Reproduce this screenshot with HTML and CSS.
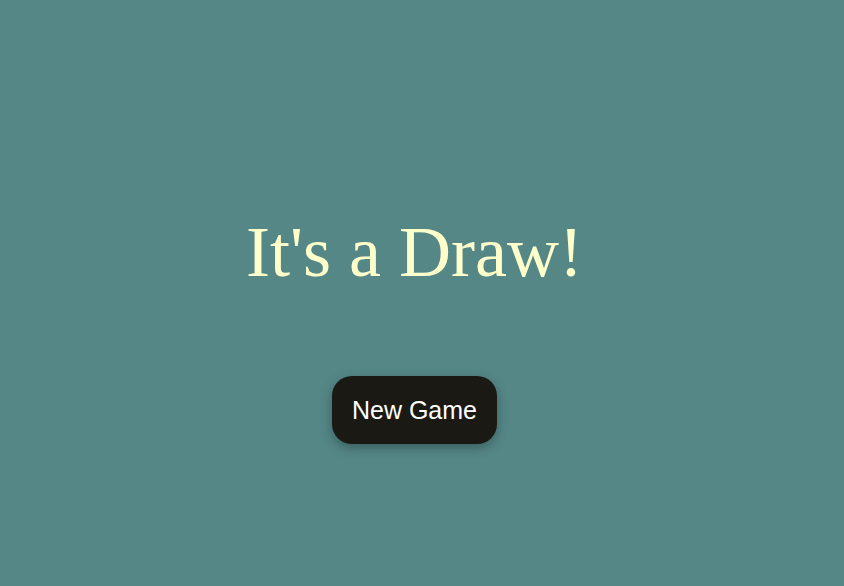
FILE: index.html
```html
<!DOCTYPE html>
<html lang="en">
<head>
<meta charset="utf-8">
<title>It's a Draw!</title>
<link rel="stylesheet" href="styles.css">
</head>
<body>
<main class="screen">
  <h1 class="result">It's a Draw!</h1>
  <button class="new-game" type="button">New Game</button>
</main>
</body>
</html>
```
FILE: styles.css
```css
html, body {
  margin: 0;
  padding: 0;
  height: 100%;
}
body {
  background: #558787;
}
.screen {
  box-sizing: border-box;
  height: 100%;
  display: flex;
  flex-direction: column;
  align-items: center;
  padding-top: 212px;
  padding-right: 15px;
  gap: 84px;
}
.result {
  margin: 0;
  font-family: "Liberation Serif", "Times New Roman", serif;
  font-weight: normal;
  font-size: 72px;
  line-height: 80px;
  color: #ffffcc;
}
.new-game {
  font-family: "Liberation Sans", Arial, sans-serif;
  font-size: 25px;
  line-height: 28px;
  color: #ffffff;
  background: #1a1914;
  border: none;
  border-radius: 20px;
  padding: 20px 20px;
  box-shadow: 0 4px 12px rgba(0, 0, 0, 0.3);
  cursor: pointer;
}
```
